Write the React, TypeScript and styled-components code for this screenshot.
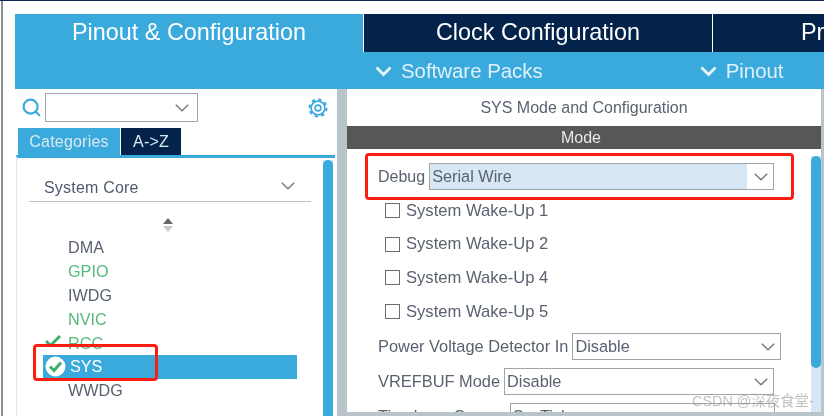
import React from 'react';
import styled, { createGlobalStyle } from 'styled-components';
import { Search } from 'lucide-react';

const GlobalStyle = createGlobalStyle`
  html, body {
    margin: 0;
    padding: 0;
    background: #fff;
    overflow: hidden;
  }
  * {
    box-sizing: border-box;
  }
`;

const Page = styled.div`
  width: 824px;
  height: 416px;
  overflow: hidden;
  position: relative;
  background: #fff;
  padding: 14px 0 0 15px;
  font-family: 'Liberation Sans', Arial, sans-serif;
  color: #5a6270;
  filter: blur(0.35px);

  &::before {
    content: '';
    position: absolute;
    left: 1px;
    top: 0;
    bottom: 0;
    width: 1.5px;
    background: #8b8f93;
  }
  &::after {
    content: '';
    position: absolute;
    left: 0;
    right: 0;
    top: 0;
    height: 1px;
    background: #0d2850;
  }
`;

const TabRow = styled.div`
  display: flex;
  height: 38px;
`;

const MainTab = styled.div<{ $active?: boolean; $width: number }>`
  width: ${p => p.$width}px;
  flex: none;
  display: flex;
  align-items: center;
  justify-content: center;
  background: ${p => (p.$active ? '#3aa9dc' : '#03234b')};
  color: #fff;
  font-size: 23.4px;
  padding-bottom: 1px;
  border-right: 1px solid #fff;
  white-space: nowrap;
`;

const LastTab = styled(MainTab)`
  justify-content: flex-start;
  padding-left: 88px;
  border-right: 0;
`;

const SubBar = styled.div`
  height: 37px;
  background: #3aa9dc;
  color: #dff1fa;
  display: flex;
  align-items: center;
  font-size: 20.4px;
  padding: 1px 0 0 360px;
`;

const SubItem = styled.div<{ $gap: number }>`
  display: flex;
  align-items: center;
  gap: 9px;
  margin-right: ${p => p.$gap}px;

  svg {
    flex: none;
  }
`;

const Body = styled.div`
  display: flex;
  height: 327px;
`;

const LeftPanel = styled.div`
  width: 322px;
  flex: none;
  padding: 4px 0 0 1px;
`;

const SearchRow = styled.div`
  display: flex;
  align-items: center;
  height: 29px;
  padding-left: 5px;
  margin-bottom: 6px;
`;

const SearchIcon = styled(Search)`
  color: #3aa9dc;
  margin-right: 3px;
  flex: none;
`;

const Combo = styled.div<{ $width: number; $height?: number; $selected?: boolean; $padRight?: number }>`
  width: ${p => p.$width}px;
  height: ${p => p.$height ?? 27}px;
  flex: none;
  border: 1.5px solid #a0a5a8;
  background: ${p =>
    p.$selected
      ? 'linear-gradient(to right, #d8e7f4 calc(100% - 26px), #fff calc(100% - 26px))'
      : '#fff'};
  display: flex;
  align-items: center;
  justify-content: space-between;
  padding: 0 ${p => p.$padRight ?? 5}px 0 2px;
  font-size: 16.3px;
  color: #5a6270;
  white-space: nowrap;
`;

const ChevronSvg = styled.svg`
  flex: none;
`;

const GearSvg = styled.svg`
  margin-left: 110px;
  flex: none;
`;

const SubTabs = styled.div`
  display: flex;
  gap: 1px;
  padding-left: 2px;
  height: 27px;
`;

const SubTab = styled.div<{ $active?: boolean; $width: number }>`
  width: ${p => p.$width}px;
  background: ${p => (p.$active ? '#3aa9dc' : '#03234b')};
  color: #dbe9f2;
  font-size: 16px;
  letter-spacing: 0.2px;
  display: flex;
  align-items: center;
  justify-content: center;
`;

const ListPanel = styled.div`
  position: relative;
  height: 261px;
  margin-right: 2px;
  border-top: 3px solid #3aa9dc;
  border-left: 1px solid #e4e8ea;
  padding: 17px 0 0 12px;
`;

const ScrollTrack = styled.div<{ $right: number; $top: number; $thumb?: number }>`
  position: absolute;
  right: ${p => p.$right}px;
  top: ${p => p.$top}px;
  bottom: 0;
  width: 10px;
  background: #d6e6f4;

  &::before {
    content: '';
    position: absolute;
    left: 0;
    right: 0;
    top: 0;
    height: ${p => p.$thumb ?? 300}px;
    background: #3aa9dc;
    border-radius: 5px;
  }
`;

const GroupHeader = styled.div`
  width: 282px;
  height: 27px;
  border-bottom: 1px solid #b9c4ca;
  display: flex;
  align-items: center;
  justify-content: space-between;
  padding: 0 16px 0 15px;
  font-size: 16px;
  letter-spacing: 0.2px;
  color: #4f5a70;

  svg {
    margin-top: -5px;
  }
`;

const SortArrows = styled.div`
  display: flex;
  flex-direction: column;
  align-items: center;
  gap: 2px;
  width: 278px;
  margin: 16px 0 4px;
`;

const Arrow = styled.div<{ $down?: boolean }>`
  width: 0;
  height: 0;
  border-left: 5px solid transparent;
  border-right: 5px solid transparent;
  border-bottom: ${p => (p.$down ? '0' : '6px solid #666')};
  border-top: ${p => (p.$down ? '6px solid #c4c8ca' : '0')};
`;

const Item = styled.div<{ $color?: string; $selected?: boolean }>`
  position: relative;
  height: 23.8px;
  width: 254px;
  margin-left: 14px;
  padding-left: ${p => (p.$selected ? '27px' : '25px')};
  display: flex;
  align-items: center;
  font-size: 16.2px;
  color: ${p => (p.$selected ? '#fff' : p.$color ?? '#5a6270')};
  background: ${p => (p.$selected ? '#3aa9dc' : 'transparent')};
`;

const ItemCheck = styled.svg`
  position: absolute;
  left: 2px;
  top: 3px;
`;

const SelectedCheck = styled.svg`
  position: absolute;
  left: 2px;
  top: 1px;
`;

const RedBox = styled.div<{ $l: number; $t: number; $w: number; $h: number }>`
  position: absolute;
  left: ${p => p.$l}px;
  top: ${p => p.$t}px;
  width: ${p => p.$w}px;
  height: ${p => p.$h}px;
  border: 3px solid #fb1d11;
  border-radius: 4px;
  pointer-events: none;
`;

const Splitter = styled.div`
  width: 10px;
  flex: none;
  background: #b9c4ca;
`;

const RightPanel = styled.div`
  position: relative;
  width: 474px;
  flex: none;
  height: 323px;
`;

const RightEdge = styled.div`
  position: absolute;
  left: 821px;
  right: 0;
  top: 89px;
  bottom: 0;
  background: #b9c4ca;
`;

const BottomEdge = styled.div`
  position: absolute;
  left: 347px;
  right: 0;
  bottom: 0;
  height: 4px;
  background: #b9c4ca;
`;

const PanelTitle = styled.div`
  height: 37px;
  display: flex;
  align-items: center;
  justify-content: center;
  font-size: 16px;
  padding: 1px 0 0 0;
  color: #5a6270;
`;

const ModeBar = styled.div`
  height: 23px;
  background: #555856;
  color: #e8e8e8;
  font-size: 16px;
  display: flex;
  align-items: center;
  justify-content: center;
  padding-right: 6px;
  margin-bottom: 14px;
`;

const FieldRow = styled.div<{ $mb?: number }>`
  position: relative;
  display: flex;
  align-items: center;
  gap: 4px;
  padding-left: 31px;
  margin-bottom: ${p => p.$mb ?? 8}px;
  font-size: 16.4px;
  white-space: nowrap;
`;

const DebugLabel = styled.span`
  font-size: 16px;
`;

const CheckRow = styled.div`
  display: flex;
  align-items: center;
  gap: 6px;
  height: 33.6px;
  padding-left: 38px;
  font-size: 16.6px;
`;

const Box = styled.span`
  width: 15px;
  height: 15px;
  border: 1.5px solid #6d6d6d;
  background: #fff;
  flex: none;
`;

const CheckList = styled.div`
  margin: 4px 0 5px;
`;

const Watermark = styled.div`
  position: absolute;
  left: 692px;
  top: 389px;
  font-size: 14.4px;
  color: rgba(150, 150, 150, 0.6);
  font-family: 'Liberation Sans', 'Noto Sans CJK SC', sans-serif;
  white-space: nowrap;
`;

const wakeUps = [1, 2, 4, 5];

const HeadChevron: React.FC = () => (
  <ChevronSvg width="17" height="11" viewBox="0 0 17 11">
    <path d="M1.5 1.5l7 7 7-7" fill="none" stroke="#e6f4fb" strokeWidth="2.8" />
  </ChevronSvg>
);

const ComboChevron: React.FC = () => (
  <ChevronSvg width="14" height="8" viewBox="0 0 14 8">
    <path d="M.8.8l6.2 6 6.2-6" fill="none" stroke="#777" strokeWidth="1.4" />
  </ChevronSvg>
);

const App: React.FC = () => {
  return (
    <Page>
      <GlobalStyle />
      <TabRow>
        <MainTab $active $width={349}>Pinout &amp; Configuration</MainTab>
        <MainTab $width={349}>Clock Configuration</MainTab>
        <LastTab $width={111}>Pr</LastTab>
      </TabRow>
      <SubBar>
        <SubItem $gap={157}>
          <HeadChevron />
          Software Packs
        </SubItem>
        <SubItem $gap={0}>
          <HeadChevron />
          Pinout
        </SubItem>
      </SubBar>
      <Body>
        <LeftPanel>
          <SearchRow>
            <SearchIcon size={21} strokeWidth={2.4} />
            <Combo $width={153} $height={29} $padRight={8}>
              <span />
              <ComboChevron />
            </Combo>
            <GearSvg width="20" height="20" viewBox="0 0 22 22" fill="none" stroke="#3aa9dc">
              <circle cx="11" cy="11" r="7.6" strokeWidth="1.8" />
              <circle cx="11" cy="11" r="9.4" strokeWidth="2.2" strokeDasharray="3.6 3.78" />
              <circle cx="11" cy="11" r="3.2" strokeWidth="1.8" />
            </GearSvg>
          </SearchRow>
          <SubTabs>
            <SubTab $active $width={102}>Categories</SubTab>
            <SubTab $width={60}>A-&gt;Z</SubTab>
          </SubTabs>
          <ListPanel>
            <ScrollTrack $right={2} $top={2} $thumb={400} />
            <GroupHeader>
              System Core
              <ComboChevron />
            </GroupHeader>
            <SortArrows>
              <Arrow />
              <Arrow $down />
            </SortArrows>
            <Item>DMA</Item>
            <Item $color="#56b97a">GPIO</Item>
            <Item>IWDG</Item>
            <Item $color="#56b97a">NVIC</Item>
            <Item $color="#56b97a">
              <ItemCheck width="16" height="14" viewBox="0 0 16 14">
                <path d="M1 7l4.5 4.5L15 2" fill="none" stroke="#3fae6a" strokeWidth="3" />
              </ItemCheck>
              RCC
            </Item>
            <Item $selected>
              <SelectedCheck width="21" height="21" viewBox="0 0 21 21">
                <circle cx="10.5" cy="10.5" r="10" fill="#fff" />
                <path d="M5 10.5l4 4 7-8" fill="none" stroke="#3fae6a" strokeWidth="3" />
              </SelectedCheck>
              SYS
              <RedBox $l={-10} $t={-11} $w={125} $h={37} />
            </Item>
            <Item>WWDG</Item>
          </ListPanel>
        </LeftPanel>
        <Splitter />
        <RightPanel>
          <PanelTitle>SYS Mode and Configuration</PanelTitle>
          <ModeBar>Mode</ModeBar>
          <FieldRow $mb={1}>
            <DebugLabel>Debug</DebugLabel>
            <Combo $width={345} $selected>
              Serial Wire
              <ComboChevron />
            </Combo>
            <RedBox $l={18} $t={-10} $w={429} $h={47} />
          </FieldRow>
          <CheckList>
            {wakeUps.map(n => (
              <CheckRow key={n}>
                <Box />
                System Wake-Up {n}
              </CheckRow>
            ))}
          </CheckList>
          <FieldRow>
            Power Voltage Detector In
            <Combo $width={209}>
              Disable
              <ComboChevron />
            </Combo>
          </FieldRow>
          <FieldRow>
            VREFBUF Mode
            <Combo $width={270}>
              Disable
              <ComboChevron />
            </Combo>
          </FieldRow>
          <FieldRow>
            Timebase Source
            <Combo $width={265}>
              SysTick
              <ComboChevron />
            </Combo>
          </FieldRow>
          <ScrollTrack $right={0} $top={67} $thumb={212} />
        </RightPanel>
      </Body>
      <RightEdge />
      <BottomEdge />
      <Watermark>CSDN @深夜食堂-</Watermark>
    </Page>
  );
};

export default App;
